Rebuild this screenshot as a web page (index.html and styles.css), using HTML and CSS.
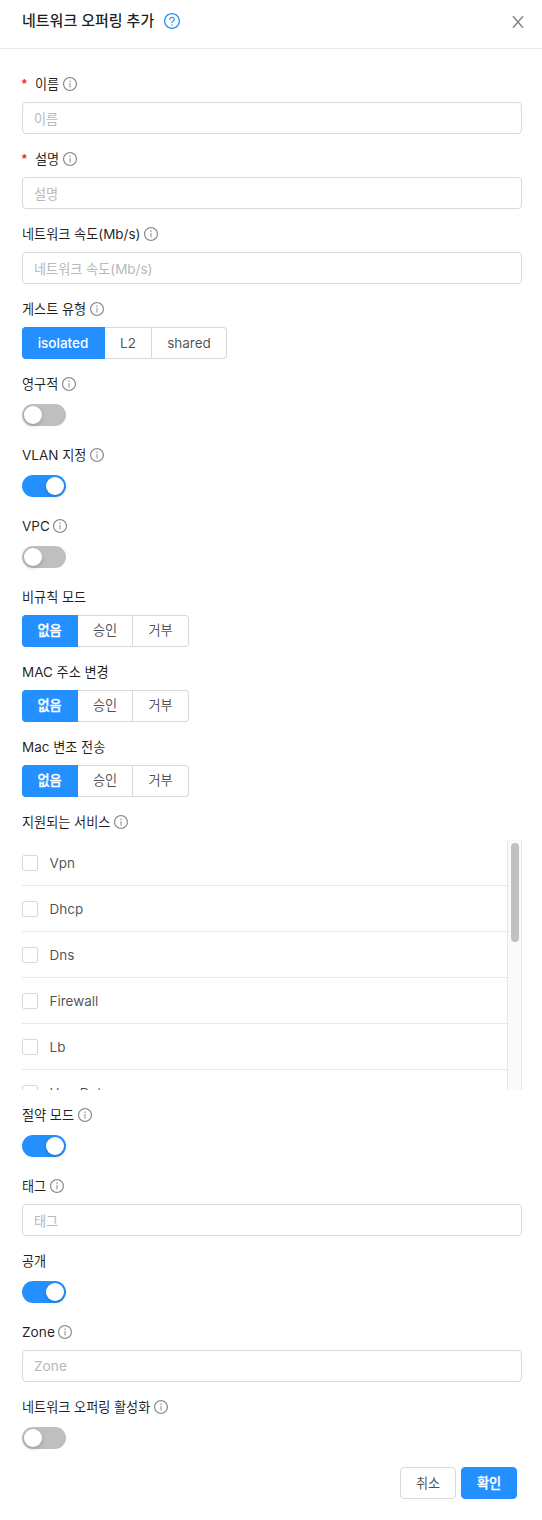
FILE: index.html
```html
<!DOCTYPE html>
<html lang="ko">
<head>
<meta charset="utf-8">
<title>네트워크 오퍼링 추가</title>
<link rel="stylesheet" href="styles.css">
</head>
<body>
<svg class="defs" width="0" height="0">
  <symbol id="info" viewBox="64 64 896 896"><path d="M512 64C264.6 64 64 264.6 64 512s200.600 448 448 448 448-200.600 448-448S759.400 64 512 64zm0 820c-205.400 0-372-166.600-372-372s166.600-372 372-372 372 166.600 372 372-166.600 372-372 372z"/><path d="M464 336a48 48 0 1 0 96 0 48 48 0 1 0-96 0zm72 112h-48c-4.400 0-8 3.600-8 8v272c0 4.400 3.600 8 8 8h48c4.400 0 8-3.600 8-8V456c0-4.400-3.600-8-8-8z"/></symbol>
  <symbol id="question" viewBox="64 64 896 896"><path d="M512 64C264.6 64 64 264.6 64 512s200.600 448 448 448 448-200.600 448-448S759.400 64 512 64zm0 820c-205.400 0-372-166.600-372-372s166.600-372 372-372 372 166.600 372 372-166.600 372-372 372z"/><path d="M623.600 316.700C593.600 290.400 554 276 512 276s-81.600 14.500-111.600 40.700C369.200 344 352 380.700 352 420v7.600c0 4.400 3.600 8 8 8h48c4.400 0 8-3.600 8-8V420c0-44.100 43.100-80 96-80s96 35.900 96 80c0 31.100-22 59.600-56.100 72.700-21.200 8.100-39.200 22.300-52.100 40.900-13.100 19-19.900 41.800-19.900 64.900V620c0 4.400 3.600 8 8 8h48c4.400 0 8-3.600 8-8v-22.700a48.300 48.300 0 0 1 30.900-44.800c59-22.700 97.100-74.700 97.100-132.500.1-39.300-17.100-76-48.300-103.300zM472 732a40 40 0 1 0 80 0 40 40 0 1 0-80 0z"/></symbol>
</svg>
<header class="header">
  <h1 class="title">네트워크 오퍼링 추가</h1>
  <svg class="help"><use href="#question"/></svg>
  <svg class="close" viewBox="0 0 12 12"><path d="M1 .3 11 11.700M11 .3 1 11.700"/></svg>
</header>
<main class="form">
  <div class="item"><div class="label required"><span>이름</span><svg class="info"><use href="#info"/></svg></div><div class="input">이름</div></div>
  <div class="item"><div class="label required"><span>설명</span><svg class="info"><use href="#info"/></svg></div><div class="input">설명</div></div>
  <div class="item"><div class="label"><span>네트워크 속도<span class="latin">(Mb/s)</span></span><svg class="info"><use href="#info"/></svg></div><div class="input"><span>네트워크 속도<span class="latin">(Mb/s)</span></span></div></div>
  <div class="item"><div class="label"><span>게스트 유형</span><svg class="info"><use href="#info"/></svg></div>
    <div class="group guest latin"><span class="option active">isolated</span><span class="option">L2</span><span class="option">shared</span></div></div>
  <div class="item"><div class="label"><span>영구적</span><svg class="info"><use href="#info"/></svg></div><div class="switch"></div></div>
  <div class="item"><div class="label"><span><span class="latin">VLAN</span> 지정</span><svg class="info"><use href="#info"/></svg></div><div class="switch on"></div></div>
  <div class="item"><div class="label"><span class="latin">VPC</span><svg class="info"><use href="#info"/></svg></div><div class="switch"></div></div>
  <div class="item"><div class="label"><span>비규칙 모드</span></div>
    <div class="group mode"><span class="option active">없음</span><span class="option">승인</span><span class="option">거부</span></div></div>
  <div class="item"><div class="label"><span><span class="latin">MAC</span> 주소 변경</span></div>
    <div class="group mode"><span class="option active">없음</span><span class="option">승인</span><span class="option">거부</span></div></div>
  <div class="item"><div class="label"><span><span class="latin">Mac</span> 변조 전송</span></div>
    <div class="group mode"><span class="option active">없음</span><span class="option">승인</span><span class="option">거부</span></div></div>
  <div class="item"><div class="label"><span>지원되는 서비스</span><svg class="info"><use href="#info"/></svg></div>
    <div class="services">
      <ul class="list latin">
        <li><i class="check"></i>Vpn</li>
        <li><i class="check"></i>Dhcp</li>
        <li><i class="check"></i>Dns</li>
        <li><i class="check"></i>Firewall</li>
        <li><i class="check"></i>Lb</li>
        <li><i class="check"></i>UserData</li>
      </ul>
      <div class="track"><div class="thumb"></div></div>
    </div></div>
  <div class="item"><div class="label"><span>절약 모드</span><svg class="info"><use href="#info"/></svg></div><div class="switch on"></div></div>
  <div class="item"><div class="label"><span>태그</span><svg class="info"><use href="#info"/></svg></div><div class="input">태그</div></div>
  <div class="item"><div class="label"><span>공개</span></div><div class="switch on"></div></div>
  <div class="item"><div class="label"><span class="latin zone">Zone</span><svg class="info"><use href="#info"/></svg></div><div class="input latin zone">Zone</div></div>
  <div class="item"><div class="label"><span>네트워크 오퍼링 활성화</span><svg class="info"><use href="#info"/></svg></div><div class="switch"></div></div>
  <footer class="actions"><button class="button">취소</button><button class="button primary">확인</button></footer>
</main>
</body>
</html>
```
FILE: styles.css
```css
* { box-sizing: border-box; }
body {
  margin: 0;
  background: #fff;
  color: rgba(0, 0, 0, .88);
  font: 13.15px/22px Inter, "Noto Sans CJK KR", sans-serif;
}
.defs { position: absolute; }
.latin { font-size: 13.5px; }
.zone { font-size: 13.7px; }
.header {
  display: flex;
  align-items: center;
  height: 49px;
  padding: 0 18px 6px 22px;
  border-bottom: 1px solid #e8e8e8;
}
.title { margin: 0; font-size: 15px; font-weight: 500; line-height: 22px; }
.help { width: 16px; height: 16px; margin-left: 10px; fill: #2490ff; }
.close { width: 12px; height: 12px; margin: 2px 0 0 auto; fill: none; stroke: #858585; stroke-width: 1.5; }
.form { padding: 24px 20px 0 22px; }
.item { margin-bottom: 14px; }
.label { display: flex; align-items: center; height: 22px; margin-bottom: 7px; white-space: nowrap; }
.required::before { content: "*"; width: 13px; color: #f5222d; font: bold 12px/14px "Liberation Sans", sans-serif; }
.info { width: 14px; height: 14px; margin-left: 3.6px; fill: #8c8c8c; }
.input {
  height: 32px;
  padding: 0 11px;
  border: 1px solid #d9d9d9;
  border-radius: 4px;
  color: #b8b8b8;
  line-height: 32px;
}
.input.zone { line-height: 31px; }
.group { display: grid; width: max-content; height: 32px; }
.mode { grid-template-columns: 56px 55px 56px; }
.guest { grid-template-columns: 83px 47px 75px; }
.option {
  border: solid #d9d9d9;
  border-width: 1px 1px 1px 0;
  color: rgba(0, 0, 0, .7);
  line-height: 30px;
  text-align: center;
}
.mode .option { line-height: 29px; }
.option:last-child { border-radius: 0 4px 4px 0; }
.option.active {
  border-color: #2490ff;
  border-radius: 4px 0 0 4px;
  background: #2490ff;
  color: #fff;
  font-weight: 500;
}
.mode .active, .primary { -webkit-text-stroke: .3px #fff; }
.switch {
  display: flex;
  width: 44px;
  height: 22px;
  margin: 9px 0 18px;
  padding: 2px;
  border-radius: 11px;
  background: #bfbfbf;
}
.switch::before { content: ""; width: 18px; height: 18px; border-radius: 50%; background: #fff; box-shadow: 0 2px 4px rgba(0, 35, 11, .2); }
.switch.on { justify-content: flex-end; background: #2490ff; }
.services { display: flex; height: 250px; overflow: hidden; }
.list { flex: 1; margin: 0; padding: 0; list-style: none; color: rgba(0, 0, 0, .7); }
.list li { display: flex; align-items: center; gap: 11.5px; height: 46px; border-bottom: 1px solid #e8e8e8; }
.check { width: 16px; height: 16px; border: 1px solid #d9d9d9; border-radius: 2px; }
.track { width: 15px; height: 250px; padding: 3px; border: solid #e8e8e8; border-width: 0 1px; background: #fafafa; }
.thumb { width: 8px; height: 99px; border-radius: 4px; background: #c1c1c1; }
.actions { display: flex; justify-content: flex-end; gap: 5px; padding-right: 5px; }
.button {
  width: 56px;
  height: 32px;
  padding: 0 0 1px;
  border: 1px solid #d9d9d9;
  border-radius: 4px;
  background: #fff;
  color: rgba(0, 0, 0, .7);
  font: inherit;
}
.primary { border-color: #2490ff; background: #2490ff; color: #fff; font-weight: 500; }
```
